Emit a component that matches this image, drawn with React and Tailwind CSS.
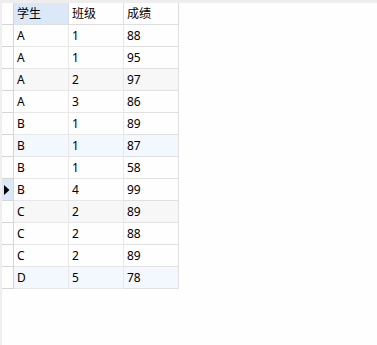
import { Fragment } from "react";

const rows = [
    { name: "A", cls: 1, score: 88 },
    { name: "A", cls: 1, score: 95 },
    { name: "A", cls: 2, score: 97, tint: "bg-[#f7f7f7]" },
    { name: "A", cls: 3, score: 86 },
    { name: "B", cls: 1, score: 89 },
    { name: "B", cls: 1, score: 87, tint: "bg-[#f2f8fe]" },
    { name: "B", cls: 1, score: 58 },
    { name: "B", cls: 4, score: 99, current: true },
    { name: "C", cls: 2, score: 89, tint: "bg-[#f7f7f7]" },
    { name: "C", cls: 2, score: 88 },
    { name: "C", cls: 2, score: 89 },
    { name: "D", cls: 5, score: 78, tint: "bg-[#f2f8fe]" },
];

export default function App() {
    /* ================= RENDER ================= */
    return (
        <div
            className="w-[377px] h-[345px] bg-[#fefefe] flex flex-col text-[12px] text-black overflow-hidden"
            style={{ fontFamily: '"Noto Sans", "Noto Sans CJK SC", sans-serif' }}
        >
            {/* Top strip */}
            <div className="h-[3px] shrink-0 bg-[#eeeeee]" />

            <div className="flex flex-1">
                {/* Left strip */}
                <div className="w-[2px] bg-[#efefef]" />

                {/* Grid */}
                <div className="grid grid-cols-[12px_55px_55px_55px] auto-rows-[22px] self-start">
                    {/* Header */}
                    <div className="border-r border-b border-[#d6d6d6]" />
                    <div className="bg-[#dae8f7] border-r border-b border-[#dedede] pl-[3px] leading-[21px]">
                        学生
                    </div>
                    <div className="border-r border-b border-[#dedede] pl-[3px] leading-[21px]">
                        班级
                    </div>
                    <div className="border-r border-b border-[#dedede] pl-[3px] leading-[21px]">
                        成绩
                    </div>

                    {/* Rows */}
                    {rows.map((r, i) => (
                        <Fragment key={i}>
                            <div
                                className={`border-r border-b border-[#d6d6d6] flex items-center ${
                                    r.current ? "bg-[#dae8f7]" : ""
                                }`}
                            >
                                {r.current && (
                                    <svg width="6" height="10" viewBox="0 0 6 10" className="ml-[2px]">
                                        <path d="M0 0 L5.5 5 L0 10 Z" fill="#000" />
                                    </svg>
                                )}
                            </div>
                            <div className={`border-r border-b border-[#e8e8e8] pl-[3px] leading-[21px] ${r.tint || ""}`}>
                                {r.name}
                            </div>
                            <div className={`border-r border-b border-[#e8e8e8] pl-[3px] leading-[21px] ${r.tint || ""}`}>
                                {r.cls}
                            </div>
                            <div className={`border-r border-b border-[#e0e0e0] pl-[3px] leading-[21px] ${r.tint || ""}`}>
                                {r.score}
                            </div>
                        </Fragment>
                    ))}
                </div>
            </div>
        </div>
    );
}
